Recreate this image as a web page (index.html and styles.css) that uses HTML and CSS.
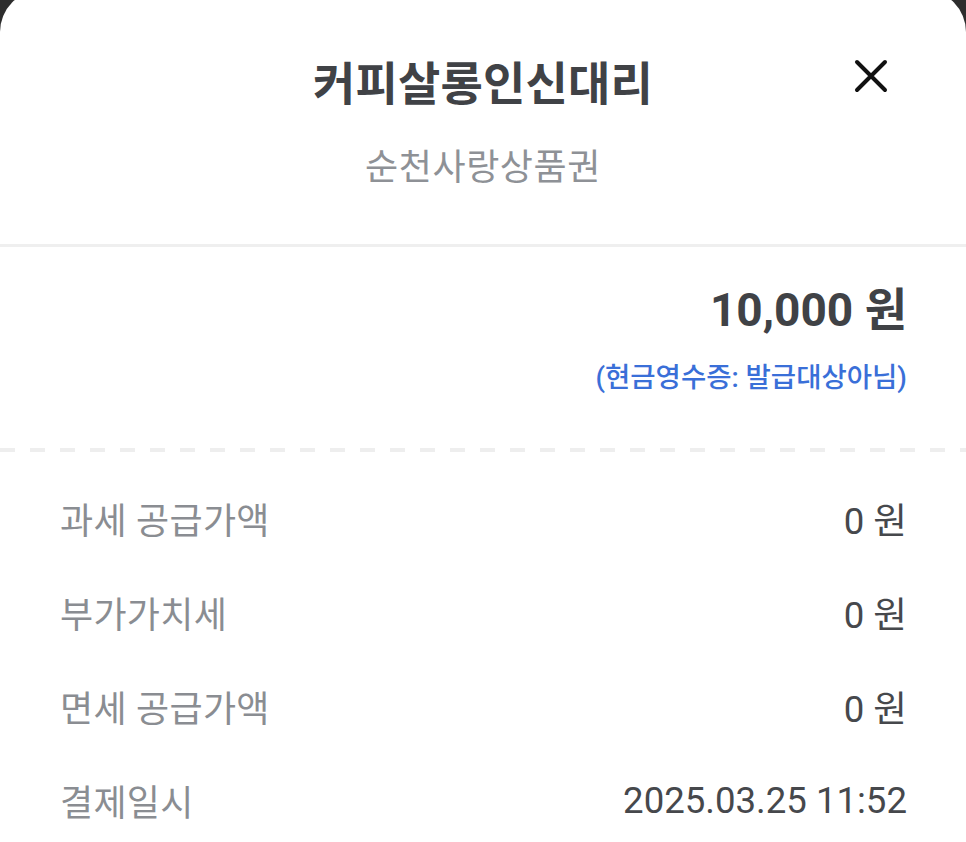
FILE: index.html
```html
<!DOCTYPE html>
<html lang="ko">
<head>
<meta charset="utf-8">
<title>결제 상세</title>
<link rel="stylesheet" href="styles.css">
</head>
<body>
<div class="sheet">
  <header class="sheet-header">
    <div class="title-row">
      <h1 class="title">커피살롱인신대리</h1>
      <button class="close" aria-label="닫기">
        <svg width="36" height="36" viewBox="0 0 36 36"><path d="M4 4 L32 32 M32 4 L4 32" stroke="#111" stroke-width="4" stroke-linecap="round" fill="none"/></svg>
      </button>
    </div>
    <p class="subtitle">순천사랑상품권</p>
  </header>
  <div class="divider"></div>
  <section class="amount-block">
    <div class="amount">10,000 원</div>
    <div class="receipt">(현금영수증: 발급대상아님)</div>
  </section>
  <div class="dashed"></div>
  <section class="rows">
    <div class="row"><span class="label">과세 공급가액</span><span class="value">0 원</span></div>
    <div class="row"><span class="label">부가가치세</span><span class="value">0 원</span></div>
    <div class="row"><span class="label">면세 공급가액</span><span class="value">0 원</span></div>
    <div class="row"><span class="label">결제일시</span><span class="value">2025.03.25 11:52</span></div>
  </section>
</div>
</body>
</html>
```
FILE: styles.css
```css
html, body {
  margin: 0;
  padding: 0;
  background: #2d2d2d;
  height: 100%;
  overflow: hidden;
}
body {
  font-family: Roboto, "Noto Sans CJK KR", sans-serif;
}
.sheet {
  background: #fff;
  margin-top: -10px;
  border-radius: 42px 42px 0 0;
  min-height: calc(100vh + 10px);
}
.sheet-header {
  padding: 65px 0 54px;
  display: flex;
  flex-direction: column;
  align-items: stretch;
}
.title-row {
  display: grid;
  grid-template-columns: 1fr auto 1fr;
}
.title {
  grid-column: 2;
  margin: 0;
  font-size: 46px;
  line-height: 58px;
  font-weight: 700;
  color: #404246;
  letter-spacing: 0.2px;
}
.close {
  grid-column: 3;
  justify-self: end;
  align-self: start;
  margin: 3px 77px 0 0;
  padding: 0;
  border: 0;
  background: none;
  width: 36px;
  height: 36px;
  display: flex;
}
.subtitle {
  margin: 33px 0 0;
  text-align: center;
  font-size: 36px;
  line-height: 44px;
  color: #8e9196;
  letter-spacing: 0.6px;
}
.divider {
  height: 3px;
  background: #efefef;
}
.amount-block {
  padding: 37px 59px 52px;
  display: flex;
  flex-direction: column;
  align-items: flex-end;
}
.amount {
  font-size: 46px;
  line-height: 52px;
  font-weight: 700;
  color: #404246;
}
.receipt {
  margin-top: 24px;
  font-size: 27.5px;
  line-height: 36px;
  font-weight: 500;
  color: #3a6fd8;
}
.dashed {
  height: 4px;
  background: repeating-linear-gradient(90deg, #eeeeee 0 15px, transparent 15px 30px);
}
.rows {
  padding: 42px 59px 0 60px;
  display: flex;
  flex-direction: column;
  gap: 46px;
}
.row {
  display: flex;
  justify-content: space-between;
  align-items: center;
  height: 48px;
}
.label {
  font-size: 36px;
  color: #8a8d92;
  letter-spacing: 0.3px;
}
.value {
  font-size: 36.6px;
  color: #46484c;
}
```
